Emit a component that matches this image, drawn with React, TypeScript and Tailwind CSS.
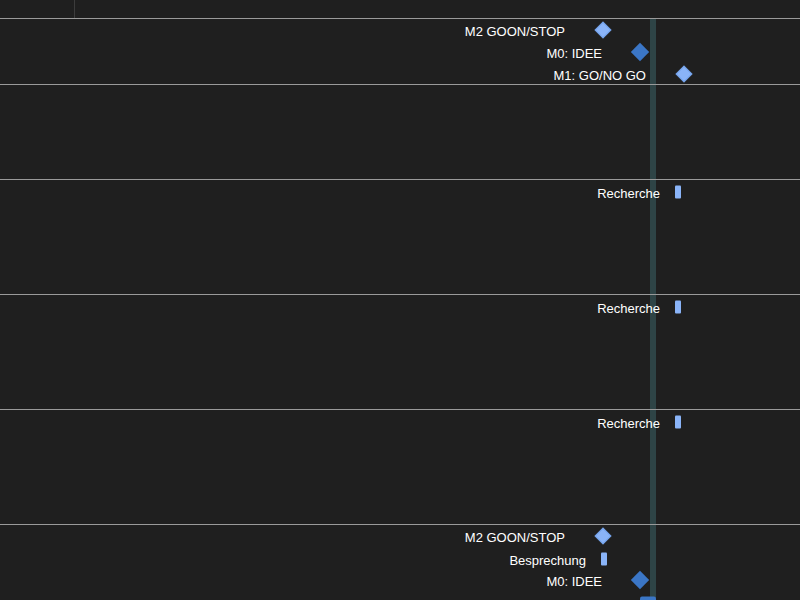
type Kind = 'ms' | 'msDark' | 'task' | 'taskDark';

interface Item {
  label: string;
  x: number; // marker centre on the timeline
  y: number; // centre, relative to row top
  kind: Kind;
}

interface Row {
  height: number;
  items: Item[];
}

const rows: Row[] = [
  {
    height: 65,
    items: [
      { label: 'M2 GOON/STOP', x: 603, y: 11, kind: 'ms' },
      { label: 'M0: IDEE', x: 640, y: 33, kind: 'msDark' },
      { label: 'M1: GO/NO GO', x: 684, y: 55, kind: 'ms' },
    ],
  },
  { height: 94, items: [] },
  { height: 114, items: [{ label: 'Recherche', x: 677.5, y: 11.5, kind: 'task' }] },
  { height: 114, items: [{ label: 'Recherche', x: 677.5, y: 11.5, kind: 'task' }] },
  { height: 114, items: [{ label: 'Recherche', x: 677.5, y: 11.5, kind: 'task' }] },
  {
    height: 120,
    items: [
      { label: 'M2 GOON/STOP', x: 603, y: 11, kind: 'ms' },
      { label: 'Besprechung', x: 603.5, y: 33.5, kind: 'task' },
      { label: 'M0: IDEE', x: 640, y: 55, kind: 'msDark' },
      { label: 'Projektauftrag', x: 648, y: 78, kind: 'taskDark' },
    ],
  },
];

function Marker({ kind }: { kind: Kind }) {
  if (kind === 'ms')
    return <div className="w-[12px] h-[12px] rotate-45 bg-[#8ab4f8] border border-[#6f9ee6]" />;
  if (kind === 'msDark') return <div className="w-[13px] h-[13px] rotate-45 bg-[#3b76c6]" />;
  if (kind === 'task') return <div className="w-[6px] h-[13px] rounded-[1px] bg-[#8ab4f8]" />;
  return <div className="w-[16px] h-[13px] rounded-[2px] bg-[#3b76c6]" />;
}

function GanttItem({ item }: { item: Item }) {
  const isMs = item.kind === 'ms' || item.kind === 'msDark';
  const gap = isMs ? 38 : item.kind === 'taskDark' ? 23 : 17.5;
  return (
    <div className="absolute w-0 h-0" style={{ left: item.x, top: item.y }}>
      <div className="absolute left-0 top-0 -translate-x-1/2 -translate-y-1/2">
        <Marker kind={item.kind} />
      </div>
      <span
        className="absolute top-[1px] -translate-y-1/2 whitespace-nowrap text-[13px] leading-none text-white"
        style={{ right: gap }}
      >
        {item.label}
      </span>
    </div>
  );
}

export default function App() {
  return (
    <div className="relative w-[800px] h-[600px] overflow-hidden bg-[#1f1f1f] font-['Liberation_Sans',Arial,sans-serif]">
      {/* header strip */}
      <div className="flex h-[19px] border-b border-[#9a9a9a]">
        <div className="w-[75px] border-r border-[#3c3c3c]" />
        <div className="flex-1" />
      </div>

      {/* today marker */}
      <div className="absolute left-[650px] top-[19px] bottom-0 w-[6px] bg-[#2e4446]" />

      {rows.map((row, i) => (
        <div
          key={i}
          className="relative border-b border-[#9a9a9a]"
          style={{ height: row.height + 1 }}
        >
          {row.items.map((item, j) => (
            <GanttItem key={j} item={item} />
          ))}
        </div>
      ))}
    </div>
  );
}
